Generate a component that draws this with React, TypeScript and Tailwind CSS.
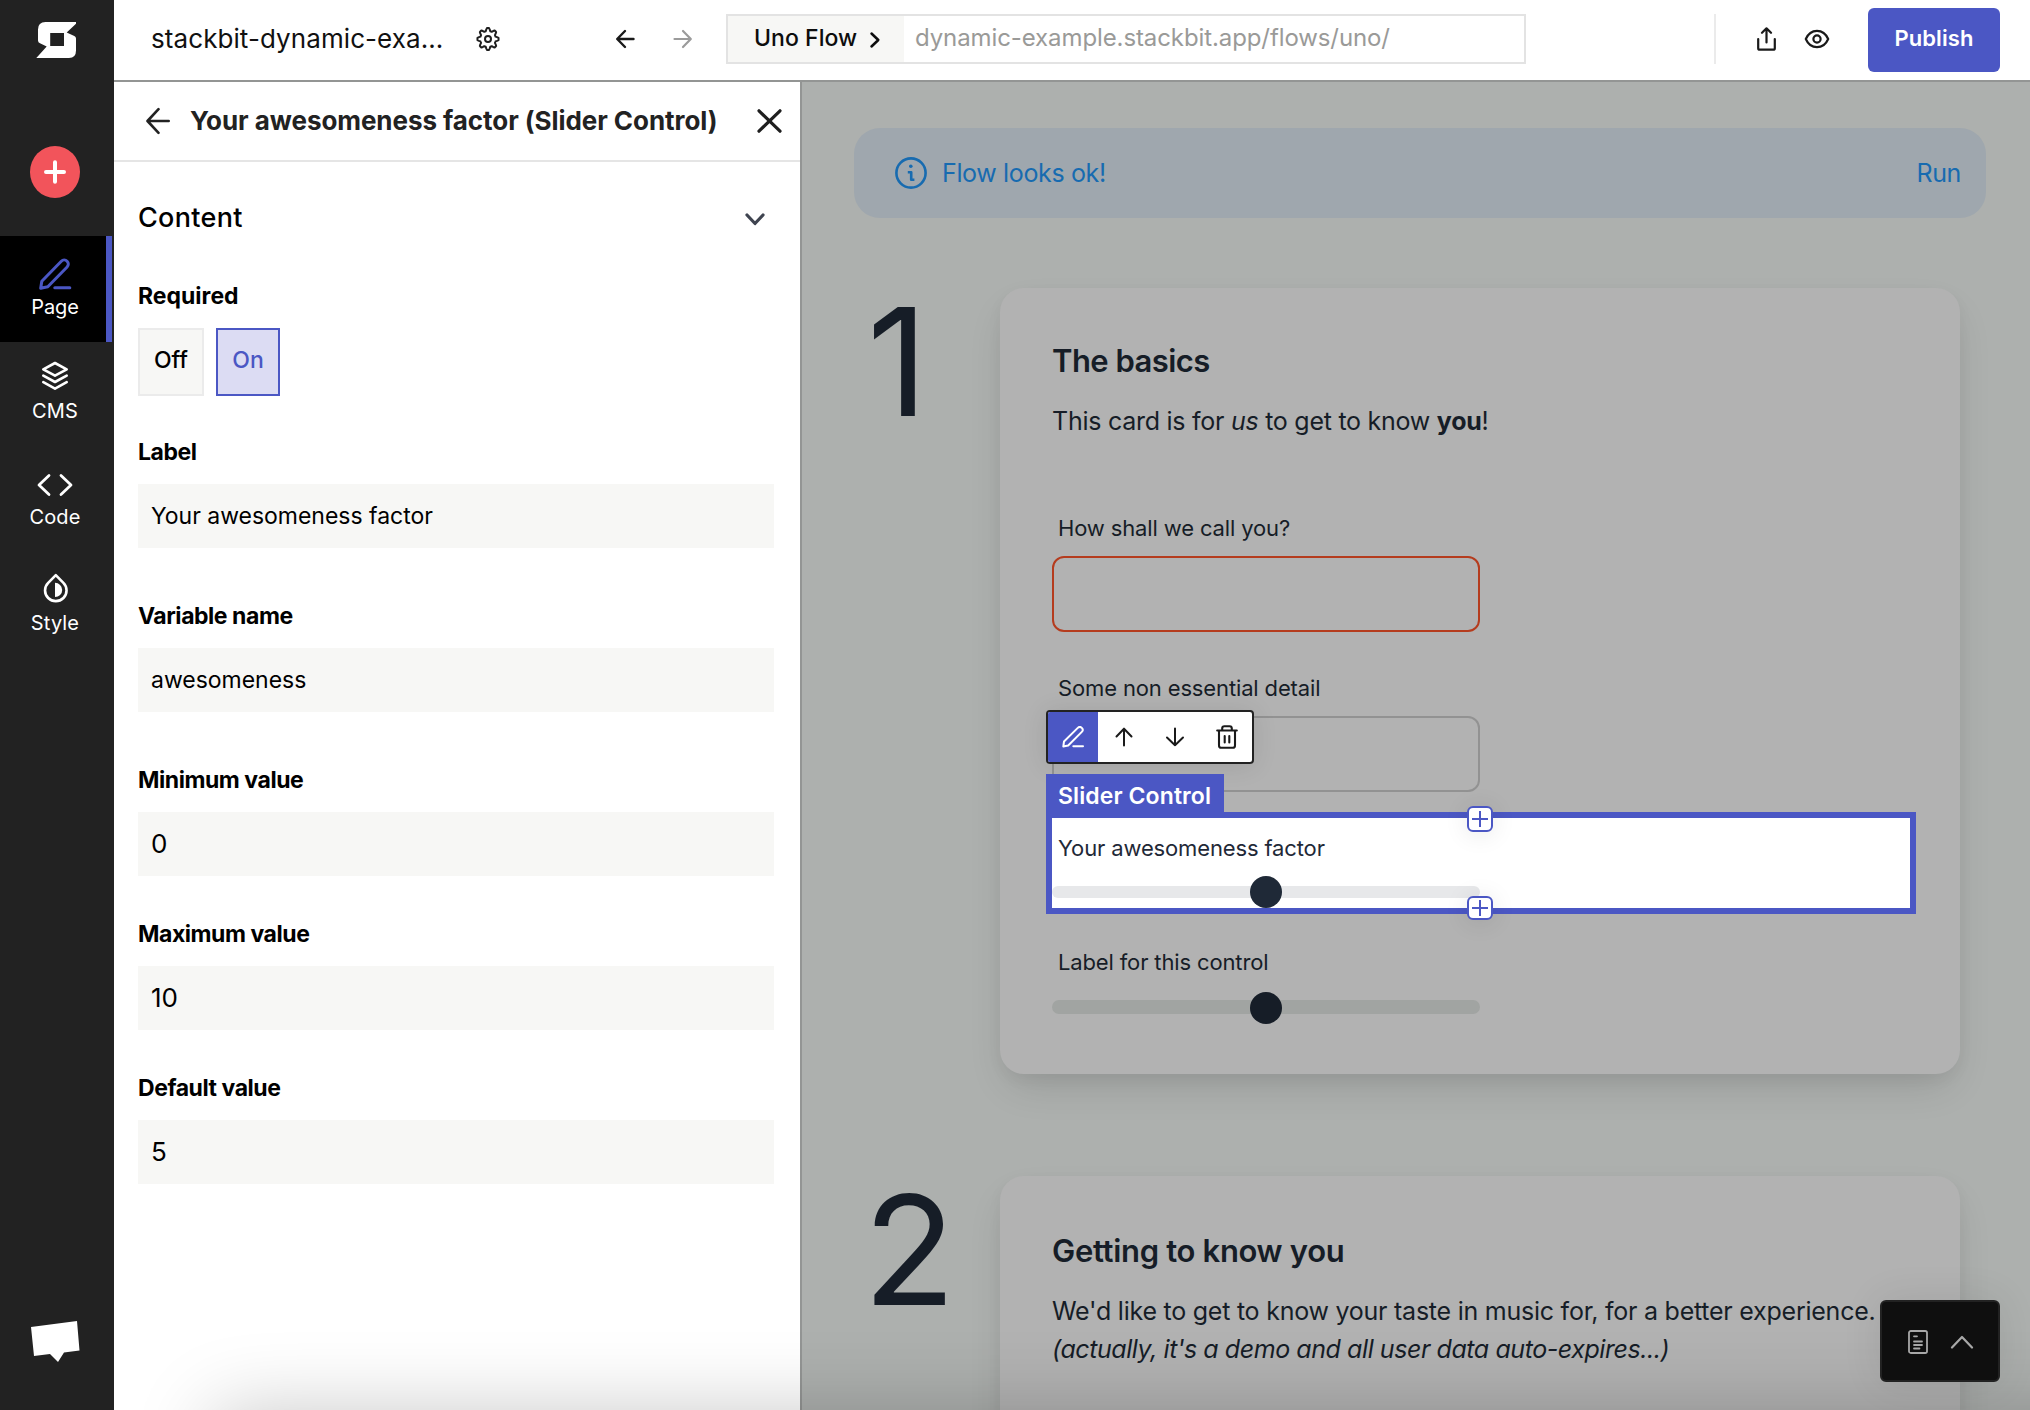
import React from "react";

type NavItemProps = { label: string; active?: boolean; children: React.ReactNode };

function NavItem({ label, active, children }: NavItemProps) {
  return (
    <div
      className={
        active
          ? "flex h-[106px] w-[112px] flex-col items-center border-r-6 border-[#4b57c4] bg-black pt-[18px] pl-1"
          : "flex h-[106px] w-[110px] flex-col items-center pt-3.5"
      }
    >
      {children}
      <span className={active ? "mt-px text-[20px] leading-6 tracking-[-0.1px]" : "mt-[3px] text-[20px] leading-6 tracking-[0.15px]"}>
        {label}
      </span>
    </div>
  );
}

function Sidebar() {
  return (
    <nav className="flex w-[114px] shrink-0 flex-col bg-[#222222] text-white">
      <svg className="mt-[22px] ml-9 h-9 w-10" viewBox="36 22 40 36" fill="currentColor">
        <path
          fillRule="evenodd"
          d="M76 22H45.500Q38 22 38 29.500V40.500Q38 42.500 40 43.300L46.700 46.600L36.300 58H69Q76 58 76 50.500V38.500Q76 36.800 74.300 36L66.700 32.500L76 23.700ZM50.200 33H64V46H50.200Z"
        />
      </svg>
      <button className="mt-[88px] ml-[30px] flex h-[52px] w-[50px] items-center justify-center rounded-[50%] bg-[#f2545b]">
        <svg className="h-6 w-6" viewBox="0 0 24 24" fill="none" stroke="currentColor" strokeWidth="4" strokeLinecap="round">
          <path d="M12 2.200V21.800M3 12H21" />
        </svg>
      </button>
      <div className="mt-[38px]">
        <NavItem label="Page" active>
          <svg className="h-10 w-10" viewBox="0 0 40 40" fill="none" stroke="#4b57c4" strokeWidth="3" strokeLinecap="round" strokeLinejoin="round">
            <path d="M5.700 34.200L6.800 27.200L26.300 7.200a4 4 0 0 1 5.800 5.800L12.800 32.700Z" />
            <path d="M19.800 33.700H34.800" />
          </svg>
        </NavItem>
        <NavItem label="CMS">
          <svg className="h-10 w-10" viewBox="0 0 40 40" fill="none" stroke="currentColor" strokeWidth="2.600" strokeLinecap="round" strokeLinejoin="round">
            <path d="M8.300 13.300L20 7L31.700 13.300L20 19.600Z" />
            <path d="M8.300 19.700L20 26L31.700 19.700" />
            <path d="M8.300 26.200L20 32.600L31.700 26.200" />
          </svg>
        </NavItem>
        <NavItem label="Code">
          <svg className="h-10 w-10" viewBox="0 0 40 40" fill="none" stroke="currentColor" strokeWidth="2.800" strokeLinecap="round" strokeLinejoin="round">
            <path d="M14 13.500L4 23L14 32.500" />
            <path d="M26 13.500L36 23L26 32.500" />
          </svg>
        </NavItem>
        <NavItem label="Style">
          <svg className="h-10 w-10" viewBox="0 0 40 40" fill="none">
            <path d="M20.800 7.200L13.200 14.800A10.750 10.750 0 1 0 28.400 14.800Z" stroke="currentColor" strokeWidth="2.600" strokeLinejoin="round" />
            <path d="M20 14.800A7.200 7.100 0 0 1 20 29Z" fill="currentColor" />
          </svg>
        </NavItem>
      </div>
      <svg className="mt-auto mb-12 ml-[31px] h-[41px] w-[49px]" viewBox="0 0 49 41" fill="currentColor">
        <path d="M0 6L46 0L48.500 29.500L33 31.500L27 41L19 33L3 35Z" />
      </svg>
    </nav>
  );
}

function GearIcon() {
  const teeth = Array.from({ length: 64 }, (_, i) => {
    const a = (i / 64) * Math.PI * 2;
    const wave = Math.max(-1, Math.min(1, Math.cos(a * 8) * 1.7));
    const r = 9.200 + wave * 1.350;
    return `${(12 + Math.sin(a) * r).toFixed(2)},${(12 - Math.cos(a) * r * 1.040).toFixed(2)}`;
  }).join(" ");
  return (
    <svg className="h-6 w-6" viewBox="0 0 24 24" fill="none" stroke="#1f1f1f" strokeWidth="2" strokeLinejoin="round">
      <polygon points={teeth} />
      <circle cx="12" cy="12" r="3" />
    </svg>
  );
}

function TopBar() {
  return (
    <header className="flex h-[82px] shrink-0 items-center border-b-2 border-[#939594] bg-white pb-0.5">
      <div className="ml-[37px] w-[325px] text-[26px] leading-8 tracking-[0.08px] text-[#111111]">stackbit-dynamic-exa...</div>
      <GearIcon />
      <svg className="ml-[115px] h-5 w-5" viewBox="0 0 20 20" fill="none" stroke="#1a1a1a" strokeWidth="2.400" strokeLinecap="round" strokeLinejoin="round">
        <path d="M18.500 10H2.500M10 2L2.200 10L10 18" />
      </svg>
      <svg className="ml-[38px] h-5 w-5" viewBox="0 0 20 20" fill="none" stroke="#9b9b9b" strokeWidth="2.200" strokeLinecap="round" strokeLinejoin="round">
        <path d="M1.500 10H17.500M10 2L17.800 10L10 18" />
      </svg>
      <div className="ml-[33px] flex h-[50px] w-[800px] border-2 border-[#e3e3e3]">
        <div className="flex w-[176px] items-center bg-[#f7f7f5] pl-[26px]">
          <span className="pb-[2px] text-[23px] leading-7 font-[450] tracking-[0.05px] text-[#0d0d0d]">Uno Flow</span>
          <svg className="mt-0.5 ml-[11px] h-5 w-3.5" viewBox="0 0 14 20" fill="none" stroke="#0d0d0d" strokeWidth="2.500" strokeLinecap="round" strokeLinejoin="round">
            <path d="M3.500 3.500L10.300 10L3.500 16.500" />
          </svg>
        </div>
        <div className="flex items-center pb-[3px] pl-[11px] text-[24px] leading-7 tracking-[-0.1px] text-[#9a9a98]">
          dynamic-example.stackbit.app/flows/uno/
        </div>
      </div>
      <div className="ml-[188px] h-[50px] w-0.5 bg-[#ebebeb]" />
      <svg className="ml-[40px] h-6 w-5" viewBox="0 0 20 24" fill="none" stroke="#1a1a1a" strokeWidth="2.200" strokeLinecap="round" strokeLinejoin="round">
        <path d="M2.200 12V21.200Q2.200 22.700 3.700 22.700H17.300Q18.800 22.700 18.800 21.200V12" />
        <path d="M10.500 15.500V1.300M6 5.800L10.500 1.300L15 5.800" />
      </svg>
      <svg className="ml-7 h-5 w-[26px]" viewBox="0 0 26 20" fill="none" stroke="#1a1a1a" strokeWidth="2.200" strokeLinejoin="round">
        <path d="M1.800 10C4.200 4.500 8.500 1.800 13 1.800S21.800 4.500 24.200 10C21.800 15.500 17.500 18.200 13 18.200S4.200 15.500 1.800 10Z" />
        <circle cx="13" cy="10" r="3.600" />
      </svg>
      <button className="mt-0.5 ml-[38px] flex h-16 w-[132px] items-center justify-center rounded-md bg-[#4b57c4] pb-[4px] text-[22px] font-semibold tracking-[0.1px] text-white">
        Publish
      </button>
    </header>
  );
}

function Field({ label, value, className, numeric }: { label: string; value: string; className: string; numeric?: boolean }) {
  return (
    <div className={className}>
      <div className="text-[23px] leading-[30px] font-bold tracking-[-0.45px]">{label}</div>
      <div
        className={
          numeric
            ? "mt-[17px] flex h-16 items-center bg-[#f7f7f5] px-[13px] pb-px text-[26px]"
            : "mt-[17px] flex h-16 items-center bg-[#f7f7f5] px-[13px] text-[23px] tracking-[-0.02px]"
        }
      >
        {value}
      </div>
    </div>
  );
}

function EditorPanel() {
  return (
    <aside className="flex w-[688px] shrink-0 flex-col border-r-2 border-[#939594] bg-white">
      <div className="flex h-20 items-center border-b-2 border-[#e5e5e5] pl-8">
        <svg className="h-7 w-6" viewBox="0 0 24 28" fill="none" stroke="#222222" strokeWidth="2.600" strokeLinecap="round" strokeLinejoin="round">
          <path d="M22.700 14H1.800M12.500 2.200L1.500 14L12.500 25.800" />
        </svg>
        <h1 className="ml-5 text-[26px] leading-8 font-bold tracking-[-0.06px] whitespace-nowrap text-[#222222]">
          Your awesomeness factor (Slider Control)
        </h1>
        <svg className="mr-[18px] ml-auto h-6 w-[25px]" viewBox="0 0 25 24" fill="none" stroke="#1f1f1f" strokeWidth="3.200" strokeLinecap="round">
          <path d="M2 1.800L23 22.200M23 1.800L2 22.200" />
        </svg>
      </div>
      <div className="flex flex-col pr-[26px] pl-6 text-black">
        <div className="mt-[37px] flex h-10 items-center justify-between pr-[7px]">
          <h2 className="pb-0.5 text-[27px] font-[450] tracking-[0.3px]">Content</h2>
          <svg className="h-5 w-6" viewBox="0 0 24 20" fill="none" stroke="#3f4450" strokeWidth="3.200" strokeLinecap="round" strokeLinejoin="round">
            <path d="M4 6L12 14.500L20 6" />
          </svg>
        </div>
        <div className="mt-[42px] text-[23px] leading-[30px] font-bold">Required</div>
        <div className="mt-[17px] flex gap-3">
          <button className="flex h-[68px] w-[66px] items-center justify-center border-2 border-[#ebebeb] bg-[#f7f7f5] pb-1 text-[23px] font-medium">
            Off
          </button>
          <button className="flex h-[68px] w-16 items-center justify-center border-2 border-[#4b57c4] bg-[#dcdcf3] pb-1 text-[23px] font-[450] text-[#4b57c4]">
            On
          </button>
        </div>
        <Field className="mt-[41px]" label="Label" value="Your awesomeness factor" />
        <Field className="mt-[53px]" label="Variable name" value="awesomeness" />
        <Field className="mt-[53px]" label="Minimum value" value="0" numeric />
        <Field className="mt-[43px]" label="Maximum value" value="10" numeric />
        <Field className="mt-[43px]" label="Default value" value="5" numeric />
      </div>
    </aside>
  );
}

function ControlLabel({ children }: { children: React.ReactNode }) {
  return <div className="pl-1.5 text-[22px] leading-8 tracking-[-0.14px]">{children}</div>;
}

function AddBadge({ className }: { className: string }) {
  return (
    <div className={className}>
      <svg className="h-4 w-4 shrink-0" viewBox="0 0 16 16" fill="none" stroke="#4b57c4" strokeWidth="2">
        <path d="M8 0V16M0 8H16" />
      </svg>
    </div>
  );
}

function SelectedControl() {
  return (
    <div className="relative mt-5 -ml-1.5 h-[102px] w-[870px] border-6 border-[#4b57c4] bg-white pt-3.5 text-[#1f2937]">
      <ControlLabel>Your awesomeness factor</ControlLabel>
      <div className="mt-3 flex h-8 w-[428px] items-center justify-center">
        <div className="flex h-3 w-full items-center justify-center rounded-full bg-[#e7e8ea]">
          <div className="h-8 w-8 shrink-0 rounded-full bg-[#1f2937]" />
        </div>
      </div>
      <div className="absolute -top-[108px] -left-1.5 flex h-[54px] w-[208px] overflow-hidden rounded-[4px] border-2 border-[#222222] bg-white shadow-[0_2px_24px_rgba(0,0,0,0.1)]">
        <button className="flex w-[50px] items-center justify-center bg-[#4b57c4]">
          <svg className="h-[22px] w-[22px]" viewBox="0 0 22 22" fill="none" stroke="white" strokeWidth="2" strokeLinecap="round" strokeLinejoin="round">
            <path d="M1.300 20.600L2 15.500L15.800 1.900a2.800 2.800 0 0 1 4 4L6.200 19.500Z" />
            <path d="M11.300 20.300H21" />
          </svg>
        </button>
        <button className="flex w-[50px] items-center justify-center pl-0.5">
          <svg className="h-5 w-5" viewBox="0 0 20 20" fill="none" stroke="#1a1a1a" strokeWidth="2" strokeLinecap="round" strokeLinejoin="round">
            <path d="M10 18.500V1.800M2.500 9.500L10 1.800L17.500 9.500" />
          </svg>
        </button>
        <button className="flex w-[50px] items-center justify-center pl-[3px]">
          <svg className="h-5 w-5" viewBox="0 0 20 20" fill="none" stroke="#1a1a1a" strokeWidth="2" strokeLinecap="round" strokeLinejoin="round">
            <path d="M10 1.500V18.200M2 10.500L10 18.200L18 10.500" />
          </svg>
        </button>
        <button className="flex w-[54px] items-center justify-center pl-1">
          <svg className="h-6 w-[22px]" viewBox="0 0 22 24" fill="none" stroke="#1a1a1a" strokeWidth="2.100" strokeLinecap="round" strokeLinejoin="round">
            <path d="M1.200 5.500H20.800M3 5.500V20.500Q3 22.800 5.200 22.800H16.800Q19 22.800 19 20.500V5.500M6.200 5.500V3.500Q6.200 1.200 8.400 1.200H13.600Q15.800 1.200 15.800 3.500V5.500M8.700 11V17.500M13.300 11V17.500" />
          </svg>
        </button>
      </div>
      <div className="absolute -top-11 -left-1.5 flex h-[38px] w-[178px] items-center bg-[#4b57c4] pt-[6px] pl-3 text-[23px] font-semibold tracking-[0.1px] whitespace-nowrap text-white">
        Slider Control
      </div>
      <AddBadge className="absolute -top-3 left-[415px] flex h-[26px] w-[26px] items-center justify-center rounded-md border-2 border-[#4b57c4] bg-white shadow-[0_2px_24px_rgba(0,0,0,0.1)]" />
      <AddBadge className="absolute top-[78px] left-[415px] flex h-6 w-[26px] items-center justify-center rounded-md border-2 border-[#4b57c4] bg-white shadow-[0_2px_24px_rgba(0,0,0,0.1)]" />
    </div>
  );
}

function Step({ number, numberClass, className, children }: { number: string; numberClass: string; className: string; children: React.ReactNode }) {
  return (
    <section className={className}>
      <div className={numberClass}>{number}</div>
      <div className="w-[960px] rounded-3xl bg-[#b2b2b2] px-[52px] pt-[53px] shadow-[0_18px_40px_-10px_rgba(0,0,0,0.15),0_6px_16px_rgba(0,0,0,0.04)]">
        {children}
      </div>
    </section>
  );
}

function Preview() {
  return (
    <main className="flex min-w-0 flex-1 flex-col overflow-hidden bg-[#adb0ae] pr-11 pl-[52px] text-[#161d27]">
      <div className="mt-[46px] flex h-[90px] shrink-0 items-center rounded-[26px] bg-[#9fa7ae] pr-[25px] pl-[41px] text-[25px] tracking-[-0.35px] text-[#176bb0]">
        <svg className="h-8 w-8" viewBox="0 0 32 32" fill="none" stroke="currentColor" strokeWidth="2.600">
          <circle cx="16" cy="16" r="14.600" />
          <circle cx="15.800" cy="9.300" r="1.800" fill="currentColor" stroke="none" />
          <path d="M12.800 15.200H16.200V22.800H19.400" strokeLinejoin="round" />
        </svg>
        <span className="ml-[15px] pt-0.5">Flow looks ok!</span>
        <span className="ml-auto pt-0.5">Run</span>
      </div>
      <Step
        number="1"
        numberClass="-mt-px w-[146px] shrink-0 pl-[13px] text-[150px] leading-[150px] tracking-[-6px]"
        className="mt-[70px] flex h-[786px] shrink-0"
      >
        <h3 className="text-[31px] leading-10 font-semibold tracking-[-0.55px]">The basics</h3>
        <p className="mt-[21px] text-[25px] leading-[38px] tracking-[-0.26px]">
          This card is for <em>us</em> to get to know <strong>you</strong>!
        </p>
        <div className="mt-[72px]">
          <ControlLabel>How shall we call you?</ControlLabel>
          <div className="mt-3 h-[76px] w-[428px] rounded-xl border-2 border-[#b53c1e]" />
        </div>
        <div className="mt-10">
          <ControlLabel>Some non essential detail</ControlLabel>
          <div className="mt-3 h-[76px] w-[428px] rounded-xl border-2 border-[#929292]" />
        </div>
        <SelectedControl />
        <div className="mt-8">
          <ControlLabel>Label for this control</ControlLabel>
          <div className="mt-3.5 flex h-8 w-[428px] items-center justify-center pb-0.5">
            <div className="flex h-3.5 w-full items-center justify-center rounded-full bg-[#a1a4a2]">
              <div className="mt-0.5 h-8 w-8 shrink-0 rounded-full bg-[#161d27]" />
            </div>
          </div>
        </div>
      </Step>
      <Step
        number="2"
        numberClass="-mt-0.5 w-[146px] shrink-0 pl-[9px] text-[152px] leading-[152px] tracking-[-6px]"
        className="mt-[102px] flex h-[400px] shrink-0"
      >
        <h3 className="pt-0.5 text-[31px] leading-10 font-semibold tracking-[-0.32px]">Getting to know you</h3>
        <p className="mt-[21px] text-[25px] leading-[38px] tracking-[-0.24px] whitespace-nowrap">
          We'd like to get to know your taste in music for, for a better experience.
          <br />
          <em className="tracking-[-0.43px]">(actually, it's a demo and all user data auto-expires...)</em>
        </p>
      </Step>
    </main>
  );
}

export default function App() {
  return (
    <div className="relative flex h-[1410px] w-[2030px] overflow-hidden font-['Inter',sans-serif]">
      <Sidebar />
      <div className="flex min-w-0 flex-1 flex-col">
        <TopBar />
        <div className="flex min-h-0 flex-1">
          <EditorPanel />
          <Preview />
        </div>
      </div>
      <div className="pointer-events-none absolute inset-y-0 right-0 left-[114px] overflow-hidden">
        <div className="absolute top-[1412px] -right-40 left-[100px] h-40 rounded-md shadow-[0_0_80px_rgba(0,0,0,0.22)]" />
      </div>
      <button className="absolute right-[30px] bottom-7 flex h-[82px] w-[120px] items-center rounded-md border-2 border-[#222222] bg-[#0f0f0f] pt-px pl-[26px] text-[#a8a8a8] shadow-[0_0_40px_rgba(0,0,0,0.09)]">
        <svg className="h-6 w-5" viewBox="0 0 20 24" fill="none" stroke="currentColor" strokeWidth="1.800" strokeLinecap="round">
          <rect x="1" y="1" width="18" height="22" rx="1.800" />
          <path d="M6 6.300H9M6 11.500H14M6 15H14M6 18.500H11.500" />
        </svg>
        <svg className="ml-[22px] h-3.5 w-6" viewBox="0 0 24 14" fill="none" stroke="currentColor" strokeWidth="2.200" strokeLinecap="round" strokeLinejoin="round">
          <path d="M2 12.500L12 2L22 12.500" />
        </svg>
      </button>
    </div>
  );
}
